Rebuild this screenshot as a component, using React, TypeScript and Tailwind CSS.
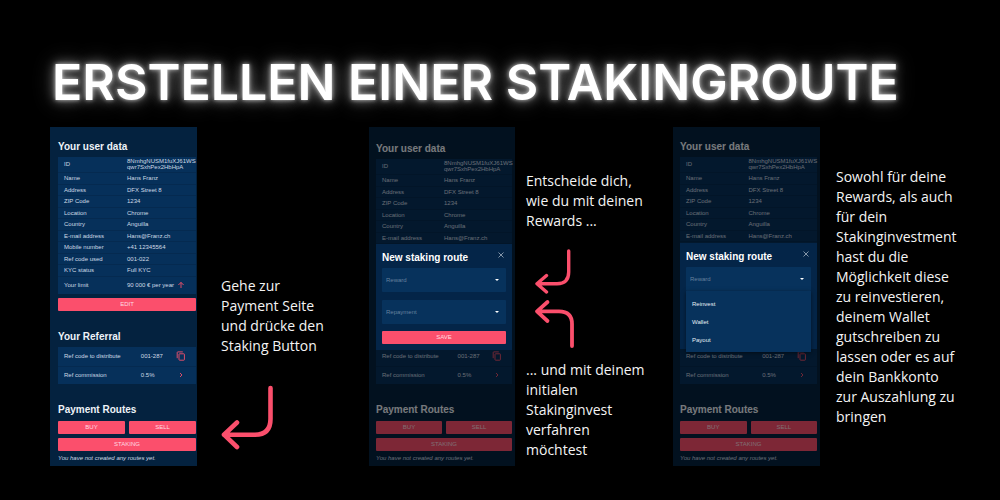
import type { ReactNode } from 'react';

const userData: [string, ReactNode][] = [
  ['Name', 'Hans Franz'],
  ['Address', 'DFX Street 8'],
  ['ZIP Code', '1234'],
  ['Location', 'Chrome'],
  ['Country', 'Anguilla'],
  ['E-mail address', 'Hans@Franz.ch'],
  ['Mobile number', '+41 12345564'],
  ['Ref code used', '001-022'],
  ['KYC status', 'Full KYC'],
];

const FIRST_COVERED_ROW = 6;

function ArrowUp() {
  return (
    <svg viewBox="0 0 8 8" className="size-2" fill="none" stroke="#f5516c" strokeWidth="0.9">
      <path d="M4 7V1.4M1.4 4L4 1.4L6.6 4" />
    </svg>
  );
}

function CopyIcon() {
  return (
    <svg viewBox="0 0 10 10" className="size-[10px]" fill="none" stroke="#f5516c" strokeWidth="0.9">
      <rect x="3" y="2.8" width="5.4" height="6.4" rx="0.6" />
      <path d="M1.2 7.2V1.5Q1.2 0.9 1.8 0.9H6.8" />
    </svg>
  );
}

function Chevron() {
  return (
    <svg viewBox="0 0 10 10" className="size-[10px]" fill="none" stroke="#f5516c" strokeWidth="0.9">
      <path d="M4 3L6 5L4 7" />
    </svg>
  );
}

function Caret() {
  return (
    <svg viewBox="0 0 6 4" className="pointer-events-none absolute top-1/2 right-[6px] h-1 w-[6px] -translate-y-1/2">
      <path d="M1 1H5L3 3Z" fill="#fff" />
    </svg>
  );
}

function PinkButton({ children }: { children: ReactNode }) {
  return (
    <button
      type="button"
      className="block h-[13px] w-full rounded-[1px] bg-[#fb4f6c] text-center text-[6px] leading-[13px] font-medium text-[#ffdbe1]"
    >
      {children}
    </button>
  );
}

function Heading({ children }: { children: ReactNode }) {
  return <h2 className="text-[10px] leading-3 font-bold whitespace-nowrap text-[#eef3f8]">{children}</h2>;
}

type ScreenProps = {
  screenClass: string;
  referralClass: string;
  dialog?: ReactNode;
};

function Screen({ screenClass, referralClass, dialog }: ScreenProps) {
  const covered = dialog ? 'invisible' : '';
  return (
    <section className={`relative bg-[#04223f] font-['Liberation_Sans',sans-serif] text-[6px] leading-[6px] text-[#cfdae5] ${screenClass}`}>
      <Heading>Your user data</Heading>
      <table className="mt-1 w-full table-fixed border-collapse bg-[#06305a]">
        <colgroup>
          <col className="w-1/2" />
          <col />
        </colgroup>
        <tbody>
          <tr className="h-[15px] border-b border-[#052a50]">
            <td className="p-0 pl-[6px]">ID</td>
            <td className="p-0">
              8NmhgNUSM1fuXJ61WS
              <br />
              qwr7SxhPex2HbHpA
            </td>
          </tr>
          {userData.map(([label, value], index) => (
            <tr
              key={label}
              className={`h-[11px] border-b border-[#052a50] even:h-[12px] ${index >= FIRST_COVERED_ROW ? covered : ''}`}
            >
              <td className="p-0 pl-[6px]">{label}</td>
              <td className="p-0">{value}</td>
            </tr>
          ))}
          <tr className={`h-[18px] ${covered}`}>
            <td className="p-0 pl-[6px]">Your limit</td>
            <td className="p-0">
              <div className="flex items-center justify-between pr-[11px] whitespace-nowrap">
                90 000 € per year
                <ArrowUp />
              </div>
            </td>
          </tr>
        </tbody>
      </table>
      <div className={`mt-1 ${covered}`}>
        <PinkButton>EDIT</PinkButton>
      </div>

      <div className={`${referralClass} ${covered}`}>
        <Heading>Your Referral</Heading>
      </div>
      <table className="mt-1 w-full table-fixed border-collapse bg-[#06305a]">
        <colgroup>
          <col className="w-3/5" />
          <col />
        </colgroup>
        <tbody>
          <tr className="h-[19px] border-b border-[#052a50]">
            <td className="p-0 pl-[6px] whitespace-nowrap">Ref code to distribute</td>
            <td className="p-0">
              <div className="flex items-center justify-between pr-[10px]">
                001-287
                <CopyIcon />
              </div>
            </td>
          </tr>
          <tr className="h-[18px]">
            <td className="p-0 pl-[6px]">Ref commission</td>
            <td className="p-0">
              <div className="flex items-center justify-between pr-[10px]">
                0.5%
                <Chevron />
              </div>
            </td>
          </tr>
        </tbody>
      </table>

      <div className="mt-5">
        <Heading>Payment Routes</Heading>
      </div>
      <div className="mt-[5px] grid grid-cols-2 gap-1">
        <PinkButton>BUY</PinkButton>
        <PinkButton>SELL</PinkButton>
        <div className="col-span-2">
          <PinkButton>STAKING</PinkButton>
        </div>
      </div>
      <p className="mt-1 pb-[5px] whitespace-nowrap italic">You have not created any routes yet.</p>

      {dialog && <div className="absolute inset-0 bg-black/50" />}
      {dialog}
    </section>
  );
}

function Field({ label }: { label: string }) {
  return (
    <div className="relative">
      <select
        aria-label={label}
        defaultValue=""
        className="block h-6 w-full appearance-none rounded-[1px] bg-[#07325c] pl-[4px] text-[6px] text-[#66809c]"
      >
        <option value="">{label}</option>
        <option>Reinvest</option>
        <option>Wallet</option>
        <option>Payout</option>
      </select>
      <Caret />
    </div>
  );
}

function Dialog({ className, id, open }: { className: string; id: string; open?: boolean }) {
  return (
    <div role="dialog" aria-labelledby={id} className={`absolute right-[3px] left-[7px] bg-[#042548] px-[6px] pt-[7px] pb-[6px] ${className}`}>
      <div className="flex items-start justify-between">
        <h3 id={id} className="text-[10px] leading-[14px] font-bold whitespace-nowrap text-white">
          New staking route
        </h3>
        <button type="button" aria-label="Close" className="mr-px">
          <svg viewBox="0 0 8 8" className="size-2" fill="none" stroke="#a5b3c2" strokeWidth="0.8">
            <path d="M1.5 1.5L6.5 6.5M6.5 1.5L1.5 6.5" />
          </svg>
        </button>
      </div>
      <div className="relative mt-[3px]">
        <Field label="Reward" />
        {open && (
          <ul className="absolute inset-x-0 top-full z-10 bg-[#07325c] pt-1 pb-[3px] text-[#e6edf4] shadow-[0_1px_4px_rgba(0,0,0,0.5)]">
            {['Reinvest', 'Wallet', 'Payout'].map((item) => (
              <li key={item}>
                <button type="button" className="block h-[18px] w-full pl-[6px] text-left text-[6px] leading-[18px] font-medium">
                  {item}
                </button>
              </li>
            ))}
          </ul>
        )}
      </div>
      <div className={open ? 'invisible' : ''}>
        <div className="mt-2">
          <Field label="Repayment" />
        </div>
        <div className="mt-[7px]">
          <PinkButton>SAVE</PinkButton>
        </div>
      </div>
    </div>
  );
}

function Note({ lines }: { lines: string[] }) {
  return (
    <p className="text-[14px] leading-5 whitespace-nowrap text-[#f4f4f4]">
      {lines.map((line) => (
        <span key={line} className="block">
          {line}
        </span>
      ))}
    </p>
  );
}

export default function App() {
  return (
    <main className="min-h-screen bg-black pr-10 pb-8 pl-[50px] font-['Open_Sans',sans-serif]">
      <h1 className="pt-[52px] pl-[2px] text-[50px] leading-[60px] font-semibold whitespace-nowrap text-white [font-family:Inter,sans-serif] [text-shadow:0_0_4px_rgba(255,255,255,0.7),0_0_12px_rgba(255,255,255,0.5),0_0_22px_rgba(255,255,255,0.3)]">
        ERSTELLEN EINER STAKINGROUTE
      </h1>
      <div className="mt-[15px] grid grid-cols-[147fr_172fr_146fr_158fr_147fr_140fr] items-start">
        <Screen screenClass="pt-[14px] pr-px pl-2" referralClass="mt-5" />

        <div className="pt-[149px] pl-6">
          <Note lines={['Gehe zur', 'Payment Seite', 'und drücke den', 'Staking Button']} />
          <svg viewBox="0 0 54 68" className="mt-7 h-[68px] w-[54px]" fill="none" stroke="#fb4f6c" strokeWidth="4.6" strokeLinecap="round" strokeLinejoin="round">
            <path d="M49.5 4V35Q49.5 50.7 34 50.7H3M16 38.5L3 50.7L16 63" />
          </svg>
        </div>

        <Screen
          screenClass="pt-4 pr-[3px] pl-[7px]"
          referralClass="mt-[18px]"
          dialog={<Dialog id="first-dialog" className="top-[117px]" />}
        />

        <div className="pt-11 pl-[11px]">
          <Note lines={['Entscheide dich,', 'wie du mit deinen', 'Rewards ...']} />
          <svg viewBox="0 0 44 104" className="mt-4 ml-2 h-[104px] w-11" fill="none" stroke="#fb4f6c" strokeLinecap="round" strokeLinejoin="round">
            <path strokeWidth="3.4" d="M34.7 4V25Q34.7 36.7 23 36.7H3M12.5 28.5L3 36.7L12.5 45" />
            <path strokeWidth="3.8" d="M38 99V77Q38 64.3 25 64.3H3M13.5 55L3 64.3L13.5 74" />
          </svg>
          <div className="mt-[9px]">
            <Note lines={['... und mit deinem', 'initialen', 'Stakinginvest', 'verfahren', 'möchtest']} />
          </div>
        </div>

        <Screen
          screenClass="pt-[14px] pr-[3px] pl-[7px]"
          referralClass="mt-5"
          dialog={<Dialog id="second-dialog" open className="top-[116px]" />}
        />

        <div className="pt-10 pl-4">
          <Note
            lines={[
              'Sowohl für deine',
              'Rewards, als auch',
              'für dein',
              'Stakinginvestment',
              'hast du die',
              'Möglichkeit diese',
              'zu reinvestieren,',
              'deinem Wallet',
              'gutschreiben zu',
              'lassen oder es auf',
              'dein Bankkonto',
              'zur Auszahlung zu',
              'bringen',
            ]}
          />
        </div>
      </div>
    </main>
  );
}
